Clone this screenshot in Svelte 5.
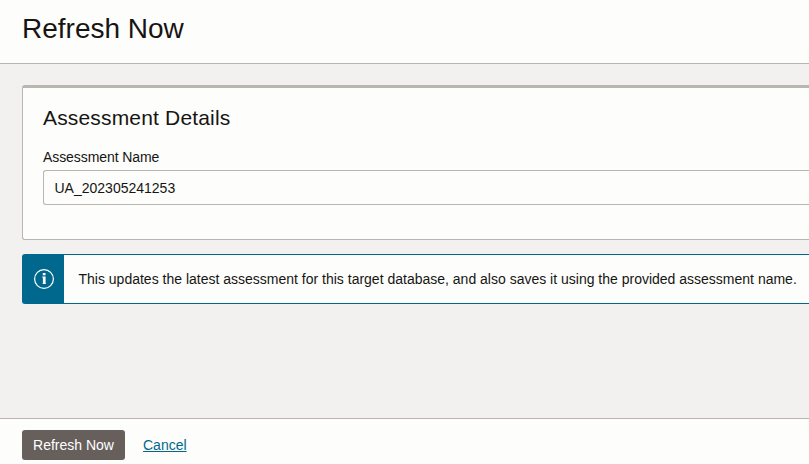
<script>
  let name = $state('UA_202305241253');
</script>

<div class="page">
  <header><h1>Refresh Now</h1></header>
  <main>
    <section class="card">
      <h2>Assessment Details</h2>
      <label for="assessment-name">Assessment Name</label>
      <input id="assessment-name" bind:value={name} spellcheck="false" />
    </section>
    <div class="notice">
      <div class="badge">
        <svg width="22" height="22" viewBox="0 0 22 22" aria-hidden="true">
          <circle cx="11" cy="11" r="9.4" fill="none" stroke="#fff" stroke-width="1.2" />
          <path d="M9.8 5h2.7v2.2H9.8zM9.2 8.5h3.4v6.7h.3v.9H9.6v-.9h.3V9.4h-.7z" fill="#fff" />
        </svg>
      </div>
      <p>This updates the latest assessment for this target database, and also saves it using the provided assessment name.</p>
    </div>
  </main>
  <footer>
    <button>Refresh Now</button>
    <a href="#cancel">Cancel</a>
  </footer>
</div>

<style>
  .page {
    display: flex;
    flex-direction: column;
    width: 809px;
    height: 464px;
    overflow: hidden;
    box-sizing: border-box;
    background: #f3f1f0;
    color: #161513;
    font-family: 'Liberation Sans', Arial, sans-serif;
    font-size: 14px;
  }
  .page * { box-sizing: border-box; }
  header {
    height: 64px;
    flex: none;
    padding: 13px 0 0 22px;
    background: #fdfdfc;
    border-bottom: 1px solid #bab5ae;
  }
  h1, h2, p { margin: 0; font-weight: 400; }
  h1 { font-size: 28px; line-height: 32px; }
  main {
    flex: 1;
    padding: 21px 0 0 22px;
  }
  .card {
    display: flex;
    flex-direction: column;
    height: 155px;
    padding: 18px 0 0 20px;
    background: #fdfdfc;
    border: 1px solid #bab5ae;
    border-top-width: 3px;
    border-right: 0;
    border-radius: 3px 0 0 3px;
  }
  h2 { font-size: 21px; line-height: 24px; letter-spacing: 0.17px; }
  label { margin-top: 19px; line-height: 16px; letter-spacing: -0.08px; }
  input {
    height: 35px;
    margin-top: 5px;
    padding: 0 0 0 10.5px;
    border: 1px solid #bab5ae;
    border-right: 0;
    border-radius: 3px 0 0 3px;
    background: #fdfdfc;
    color: inherit;
    font: inherit;
    outline: none;
  }
  .notice {
    display: flex;
    height: 50px;
    margin-top: 14px;
    border: 1px solid #00688c;
    border-right: 0;
    border-radius: 3px 0 0 3px;
    background: #fdfdfc;
  }
  .badge {
    display: flex;
    flex: none;
    align-items: center;
    justify-content: center;
    width: 41px;
    background: #00688c;
  }
  .badge svg { margin-left: 1px; }
  .notice p {
    padding-left: 14.5px;
    line-height: 48px;
    white-space: nowrap;
  }
  footer {
    display: flex;
    flex: none;
    align-items: flex-start;
    height: 46px;
    padding: 11px 0 0 22px;
    background: #fdfdfc;
    border-top: 1px solid #bab5ae;
  }
  button {
    width: 103px;
    height: 30px;
    padding: 0;
    border: 0;
    border-radius: 3px;
    background: #665f5b;
    color: #fff;
    font: inherit;
  }
  a {
    margin-left: 18px;
    color: #00688c;
    line-height: 30px;
    text-decoration: underline;
    text-underline-offset: 1px;
  }
</style>
